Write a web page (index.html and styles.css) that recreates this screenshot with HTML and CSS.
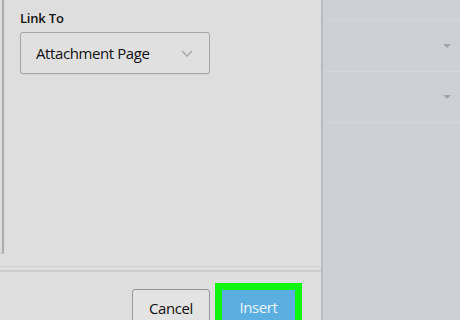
FILE: index.html
```html
<!DOCTYPE html>
<html>
<head>
<meta charset="utf-8">
<link rel="stylesheet" href="styles.css">
</head>
<body>
<div class="app">
  <div class="dialog">
    <div class="main">
      <div class="media-edge"></div>
      <div class="settings">
        <div class="label">Link To</div>
        <div class="select">
          <span class="select-text">Attachment Page</span>
          <svg class="chev" width="12" height="7" viewBox="0 0 12 7"><path d="M1 1 L6 6 L11 1" fill="none" stroke="#a3a7ab" stroke-width="1.4"/></svg>
        </div>
      </div>
    </div>
    <div class="footer">
      <button class="btn cancel">Cancel</button>
      <div class="highlight"><button class="btn insert">Insert</button></div>
    </div>
  </div>
  <div class="sidebar">
    <div class="row top"></div>
    <div class="row"><span class="tri"></span></div>
    <div class="row"><span class="tri"></span></div>
  </div>
</div>
</body>
</html>
```
FILE: styles.css
```css
html, body {
  margin: 0;
  padding: 0;
  background: #dedede;
  font-family: "Open Sans", "Noto Sans", sans-serif;
}
.app {
  display: flex;
  width: 460px;
  height: 320px;
  overflow: hidden;
}
.dialog {
  width: 321px;
  background: #dedede;
  display: flex;
  flex-direction: column;
  overflow: hidden;
}
.main {
  flex: none;
  display: flex;
  height: 266px;
  border-bottom: 1px solid #d3d5d5;
}
.media-edge {
  width: 2px;
  height: 252px;
  border-right: 2px solid #a9adad;
  border-bottom: 2px solid #c8cfcc;
  flex: none;
}
.settings {
  padding: 9px 0 0 16px;
}
.label {
  font-size: 13px;
  font-weight: 600;
  color: #141414;
  line-height: 18px;
  letter-spacing: -0.2px;
}
.select {
  margin-top: 5px;
  height: 40px;
  border: 1px solid #a0a5aa;
  border-radius: 3px;
  background: #e0e0e0;
  box-sizing: content-box;
  display: flex;
  align-items: center;
  justify-content: space-between;
  padding: 0 16px 0 0;
  width: 172px;
  box-shadow: 0 1px 0 #cfd2d2;
}
.select-text {
  padding-left: 15px;
  font-size: 15px;
  color: #111;
  letter-spacing: -0.4px;
}
.chev { display: block; margin-top: 1px; }
.footer {
  flex: none;
  height: 48px;
  margin-top: 3px;
  border-top: 2px solid #cbcece;
  display: flex;
  justify-content: flex-end;
  align-items: flex-start;
  padding: 11px 19px 0 0;
  gap: 5px;
}
.btn {
  font-family: inherit;
  font-size: 15px;
  letter-spacing: -0.4px;
  height: 40px;
  box-sizing: border-box;
  padding: 0 0 2px;
  flex: none;
}
.cancel {
  margin-top: 6px;
  width: 78px;
  border: 1px solid #94979b;
  border-radius: 3px;
  background: #e3e3e3;
  color: #111;
}
.highlight {
  flex: none;
  border: 7px solid #10f510;
  border-bottom: none;
}
.insert {
  display: block;
  width: 73px;
  border: none;
  background: #5aaee0;
  color: #eef6fb;
  border-radius: 0;
  padding-bottom: 6px;
}
.sidebar {
  flex: 1;
  background: #cdd0d4;
  border-left: 2px solid #b9bdc1;
}
.row {
  height: 50px;
  border-bottom: 1px solid #d4d7da;
  position: relative;
}
.row.top { height: 20px; }
.tri {
  position: absolute;
  right: 9px;
  top: 23px;
  width: 0;
  height: 0;
  border-left: 4px solid transparent;
  border-right: 4px solid transparent;
  border-top: 4px solid #a2a5a9;
}
```
